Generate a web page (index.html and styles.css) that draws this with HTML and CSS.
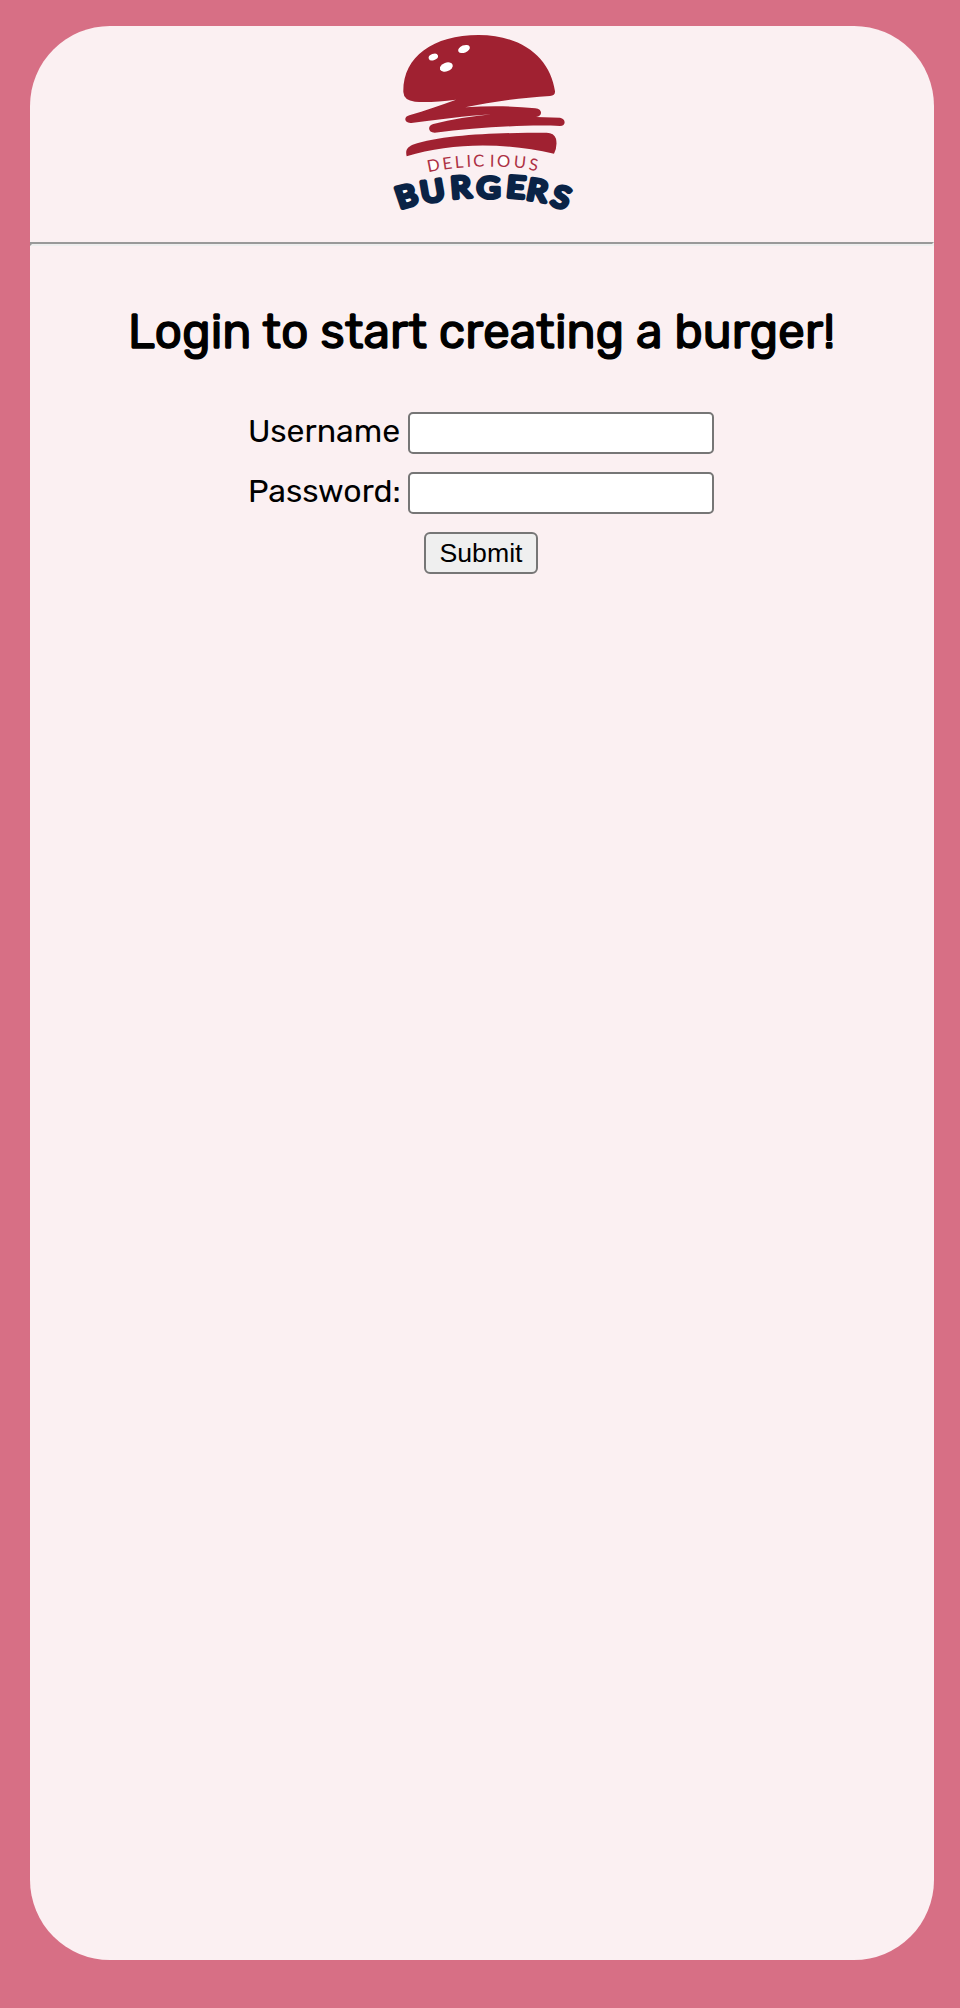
FILE: index.html
```html
<!DOCTYPE html>
<html lang="en">
<head>
<meta charset="utf-8">
<title>Delicious Burgers</title>
<link rel="stylesheet" href="styles.css">
</head>
<body>
<main class="card">
  <header class="header">
    <svg class="logo" viewBox="0 18 630 582" role="img" aria-label="Delicious Burgers">
      <g class="bun">
        <path d="M70 216C68 112 158 45 296 45C430 45 512 118 525 214Q526 227 510 228C420 233 330 247 256 262C330 257 400 258 466 265C489 267 488 289 468 291L540 293C559 296 558 318 540 318C440 313 290 323 164 338C143 338 142 316 160 312C215 298 275 289 334 283C260 287 170 300 94 309C72 311 70 290 88 286C135 273 185 254 228 239C180 245 135 248 105 245Q71 241 70 216Z"/>
        <path d="M80 409C76 392 80 382 98 374C190 344 350 338 500 338Q522 338 528 356Q533 380 522 401C375 367 215 367 80 409Z"/>
      </g>
      <g class="seed">
        <ellipse cx="160" cy="111" rx="14.500" ry="9.500" transform="rotate(-20 160 111)"/>
        <ellipse cx="252" cy="87" rx="18.500" ry="11" transform="rotate(-22 252 87)"/>
        <ellipse cx="199" cy="141" rx="20" ry="13" transform="rotate(-20 199 141)"/>
        <ellipse cx="161" cy="437" rx="11" ry="14"/>
        <ellipse cx="370" cy="424" rx="15" ry="16"/>
        <ellipse cx="80" cy="515" rx="12" ry="8"/>
        <ellipse cx="86" cy="545" rx="13" ry="9"/>
        <ellipse cx="242" cy="485" rx="13" ry="9"/>
        <ellipse cx="472" cy="498" rx="13" ry="9"/>
      </g>
      <text class="logo-top" x="145 190 226 260 280 329 350 400 445" y="457 449 445 441 440 440 440 442 449" rotate="-11 -8 -5 -3 -1 1 2 6 9">DELICIOUS</text>
      <text class="logo-bottom" transform="scale(1.1 1)" x="54 116 195 264 343 397 462" y="566 549 535 534 530 537 554" rotate="-17 -9 -4 0 5 10 17">BURGERS</text>
    </svg>
  </header>
  <hr class="divider">
  <h1 class="title">Login to start creating a burger!</h1>
  <form class="form">
    <div class="row"><label class="label" for="username">Username</label><input class="field" id="username" type="text"></div>
    <div class="row"><label class="label" for="password">Password:</label><input class="field" id="password" type="password"></div>
    <button class="submit" type="button">Submit</button>
  </form>
</main>
</body>
</html>
```
FILE: styles.css
```css
* { box-sizing: border-box; }
body {
  margin: 0;
  min-height: 2008px;
  padding: 26px 26px 48px 30px;
  background: #d76f85;
  color: #000;
  font-family: Rubik, Roboto, sans-serif;
}
.card {
  height: 1934px;
  border-radius: 80px;
  background: #fbf0f2;
  overflow: hidden;
}
.header { height: 216px; padding-left: 350px; }
.logo { display: block; width: 210px; height: 194px; }
.bun { fill: #a02131; }
.seed { fill: #fff; }
.logo-top { font: 400 50px Lato, sans-serif; fill: #ad3044; }
.logo-bottom {
  font: 400 88px Lato, sans-serif;
  fill: #0a2346;
  stroke: #0a2346;
  stroke-width: 12.5;
  stroke-linejoin: round;
}
.divider {
  height: 4px;
  margin: 0;
  border: 2px solid;
  border-color: #999 #eee #eee #999;
}
.title {
  margin: 56px 0 0;
  padding-right: 1px;
  height: 60px;
  font-size: 48px;
  line-height: 60px;
  font-weight: 400;
  text-align: center;
  white-space: nowrap;
  -webkit-text-stroke: 1.4px #000;
}
.form {
  display: flex;
  flex-direction: column;
  align-items: center;
  gap: 18px;
  padding: 50px 2px 0 0;
}
.row { display: flex; width: 466px; height: 42px; }
.label {
  width: 160px;
  flex: none;
  font-size: 32px;
  line-height: 38px;
  white-space: nowrap;
}
.field {
  width: 306px;
  height: 42px;
  border: 2px solid #767676;
  border-radius: 5px;
  background: #fff;
}
.submit {
  width: 114px;
  height: 42px;
  padding: 0;
  border: 2px solid #767676;
  border-radius: 6px;
  background: #efefef;
  color: #000;
  font: 26.67px "Liberation Sans", Arial, sans-serif;
}
```
